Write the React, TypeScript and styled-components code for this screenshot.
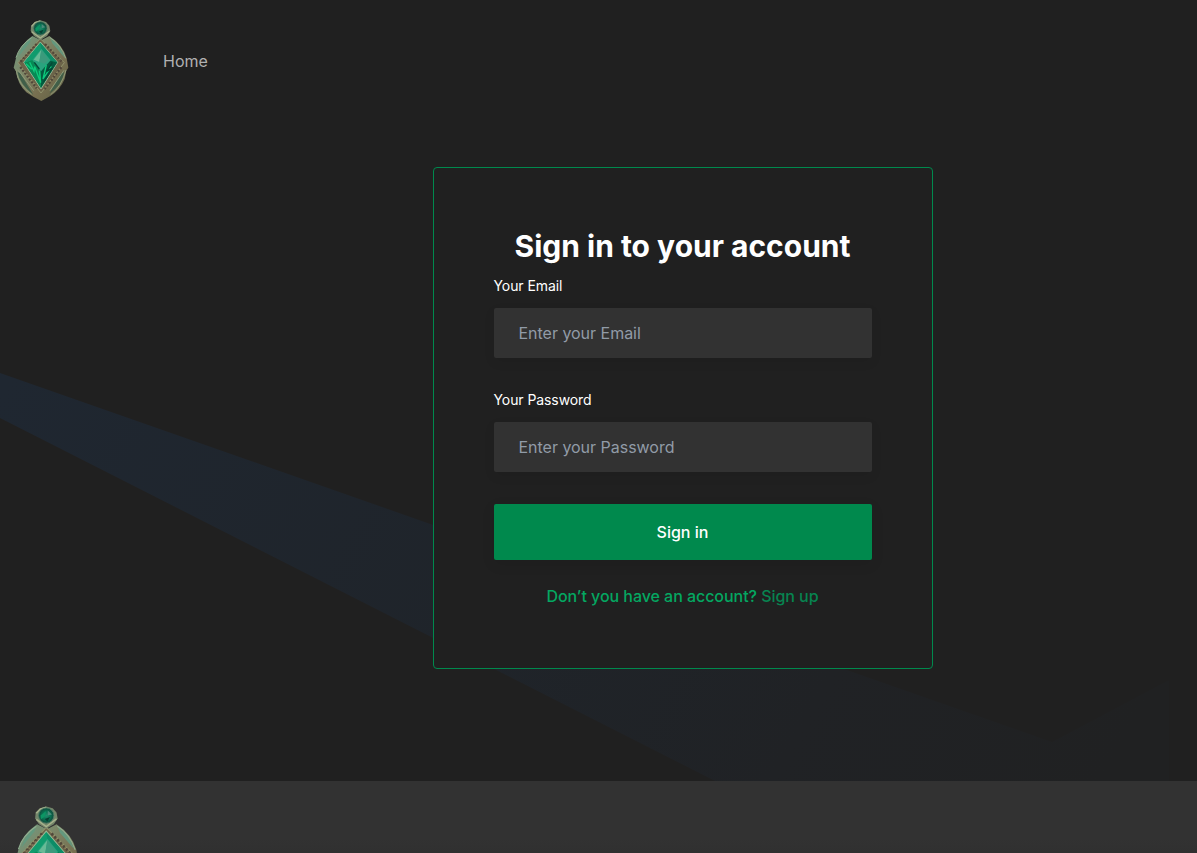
import React from "react";
import styled, { createGlobalStyle } from "styled-components";

const GlobalStyle = createGlobalStyle`
  *, *::before, *::after { box-sizing: border-box; }
  html, body { margin: 0; height: 853px; overflow: hidden; background: #202020; }
  body {
    font-family: Inter, sans-serif;
    font-size: 16px;
    line-height: 24px;
    color: #fff;
  }
`;

const Page = styled.div`
  display: flex;
  flex-direction: column;
  height: 853px;
  overflow: hidden;
  position: relative;
  isolation: isolate;
`;

const Header = styled.header`
  display: flex;
  align-items: center;
  height: 122px;
  flex: none;
  padding-left: 13px;
`;

const Brand = styled.a<{ $width: number }>`
  display: block;
  flex: none;
  width: ${(p) => p.$width}px;
  svg { display: block; width: 100%; height: auto; }
`;

const NavLink = styled.a`
  margin-left: 94px;
  color: #b1b1b1;
  text-decoration: none;
`;

const Main = styled.main`
  display: flex;
  justify-content: center;
  align-items: flex-start;
  height: 659px;
  flex: none;
  padding: 45px 0 0 168px;
`;

const Beam = styled.svg`
  position: absolute;
  left: 0;
  top: 0;
  z-index: -1;
`;

const Card = styled.form`
  display: flex;
  flex-direction: column;
  width: 500px;
  height: 502px;
  padding: 58px 60px;
  border: 1px solid #00894d;
  border-radius: 4px;
  background: #202020;
`;

const Title = styled.h1`
  margin: 0 0 10px;
  font-size: 30px;
  line-height: 40px;
  font-weight: 700;
  text-align: center;
`;

const Field = styled.div`
  display: flex;
  flex-direction: column;
  gap: 12px;
  margin-bottom: 32px;
`;

const Label = styled.label`
  font-size: 14px;
  line-height: 20px;
  letter-spacing: -0.08px;
`;

const Input = styled.input`
  height: 50px;
  padding: 0 24px;
  border: 1px solid transparent;
  border-radius: 2px;
  background: #323232;
  color: #fff;
  font: inherit;
  letter-spacing: -0.02px;
  outline: none;
  box-shadow: 0 4px 12px rgba(0, 0, 0, 0.07);
  &::placeholder { color: #919ba7; opacity: 1; }
`;

const Submit = styled.button`
  height: 56px;
  flex: none;
  border: 0;
  border-radius: 2px;
  background: #00894d;
  color: #fff;
  font: inherit;
  font-weight: 500;
  box-shadow: 0 4px 14px rgba(0, 0, 0, 0.09);
`;

const Prompt = styled.p`
  margin: 24px 0 0;
  color: #04a761;
  font-weight: 500;
  letter-spacing: -0.045px;
  text-align: center;
  a { color: #078450; text-decoration: none; }
`;

const Footer = styled.footer`
  flex: 1;
  overflow: hidden;
  padding: 25px 0 0 15px;
  background: linear-gradient(#323232 80%, #303030);
`;

function Amulet({ id }: { id: string }) {
  const gold = `${id}-gold`;
  const gem = `${id}-gem`;
  const knob = `${id}-knob`;
  return (
    <svg viewBox="40 30 168 244" aria-hidden="true">
      <defs>
        <linearGradient id={gold} x1="0" y1="0" x2="1" y2="1">
          <stop offset="0" stopColor="#6f9c83" />
          <stop offset=".35" stopColor="#7c8768" />
          <stop offset=".65" stopColor="#776f50" />
          <stop offset="1" stopColor="#5d6044" />
        </linearGradient>
        <linearGradient id={gem} x1="0" y1="0" x2="1" y2="1">
          <stop offset="0" stopColor="#27bd8b" />
          <stop offset=".5" stopColor="#068c5a" />
          <stop offset="1" stopColor="#035a3d" />
        </linearGradient>
        <radialGradient id={knob}>
          <stop offset="0" stopColor="#1f8b6c" />
          <stop offset=".55" stopColor="#087452" />
          <stop offset="1" stopColor="#12473a" />
        </radialGradient>
      </defs>
      <path d="M98 78Q62 102 49 144L42 173L49 184Q53 221 80 247L102 261L125 273L152 258Q181 240 195 207L200 182L206 173L201 145Q190 105 149 78L124 91Z" fill={`url(#${gold})`} />
      <path d="M94 86Q66 105 57 139L91 97ZM153 87Q183 106 195 143L158 100Z" fill="#63987e" />
      <path d="M49 143Q60 106 96 83M198 145Q184 103 151 83" fill="none" stroke="#8fae90" strokeWidth="3" />
      <path d="M53 185Q60 222 101 254L62 190ZM194 187Q184 229 149 251L184 191Z" fill="#405f49" />
      <path d="M49 179Q56 226 96 253M199 180Q187 229 153 254M56 181L102 242M193 181L151 242" fill="none" stroke="#8d9b78" strokeWidth="3" />
      <path d="M122 86L55 158L124 249L194 158Z" fill="#6c6449" stroke="#92946d" strokeWidth="3" />
      <path d="M111 102L61 157M136 102L188 157M62 171L111 235M185 172L135 237" fill="none" stroke="#51473a" strokeWidth="7" strokeDasharray="6 5" />
      <path d="M111 107L66 154M139 109L183 153M68 177L113 230M181 177L137 230" fill="none" stroke="#93835f" strokeWidth="3" strokeDasharray="4 7" />
      <path d="M122 96L72 157L124 237L174 157Z" fill={`url(#${gem})`} stroke="#98b594" strokeWidth="3" />
      <path d="M122 99L74 156L101 149L125 116Z" fill="#109b6d" />
      <path d="M122 99L172 156L148 151L125 116Z" fill="#0d8c67" />
      <path d="M74 158L101 149L124 183L124 232Z" fill="#078a55" />
      <path d="M172 158L148 151L124 183L124 232Z" fill="#045b40" />
      <path d="M125 116L98 150L124 184L153 151Z" fill="#2aa37e" />
      <path d="M125 119L119 156L102 149Z" fill="#68ba96" />
      <path d="M125 119L148 149L134 161L119 156Z" fill="#3b9a7c" />
      <path d="M90 157L103 184L105 170L123 218L119 182M140 165L130 207L155 169M79 161L96 178" fill="none" stroke="#0dcb7c" strokeWidth="4" />
      <path d="M158 157L141 184L158 174L132 216M104 157L119 177" fill="none" stroke="#044936" strokeWidth="4" />
      <path d="M122 31L106 36L94 47L93 63L103 78L122 90L142 78L152 63L149 47L139 36Z" fill="#74856a" />
      <path d="M96 65L122 84L149 64M96 49L106 38L122 33" fill="none" stroke="#a6b18c" strokeWidth="4" />
      <circle cx="122" cy="55" r="20" fill={`url(#${knob})`} stroke="#4b8069" strokeWidth="2" />
      <path d="M107 55L122 43L118 58L108 65Z" fill="#0c9664" />
      <path d="M126 42L137 52L126 55Z" fill="#4c8c7c" />
      <path d="M118 64L132 59L125 71Z" fill="#073f32" />
    </svg>
  );
}

export default function App() {
  return (
    <>
      <GlobalStyle />
      <Page>
        <Beam width="1197" height="781" viewBox="0 0 1197 781" aria-hidden="true">
          <defs>
            <linearGradient id="beam" gradientUnits="userSpaceOnUse" x1="0" y1="395" x2="1000" y2="960">
              <stop offset="0" stopColor="#1f2731" />
              <stop offset=".45" stopColor="#1f242a" />
              <stop offset=".75" stopColor="#202225" />
              <stop offset="1" stopColor="#202122" />
            </linearGradient>
          </defs>
          <path d="M0 373L1052 742L1169 680V781H715L0 418Z" fill="url(#beam)" />
        </Beam>
        <Header>
          <Brand $width={56}><Amulet id="header" /></Brand>
          <NavLink>Home</NavLink>
        </Header>
        <Main>
          <Card>
            <Title>Sign in to your account</Title>
            <Field>
              <Label htmlFor="email">Your Email</Label>
              <Input id="email" type="email" placeholder="Enter your Email" />
            </Field>
            <Field>
              <Label htmlFor="password">Your Password</Label>
              <Input id="password" type="password" placeholder="Enter your Password" />
            </Field>
            <Submit type="button">Sign in</Submit>
            <Prompt>Don’t you have an account? <a>Sign up</a></Prompt>
          </Card>
        </Main>
        <Footer>
          <Brand $width={64}><Amulet id="footer" /></Brand>
        </Footer>
      </Page>
    </>
  );
}
